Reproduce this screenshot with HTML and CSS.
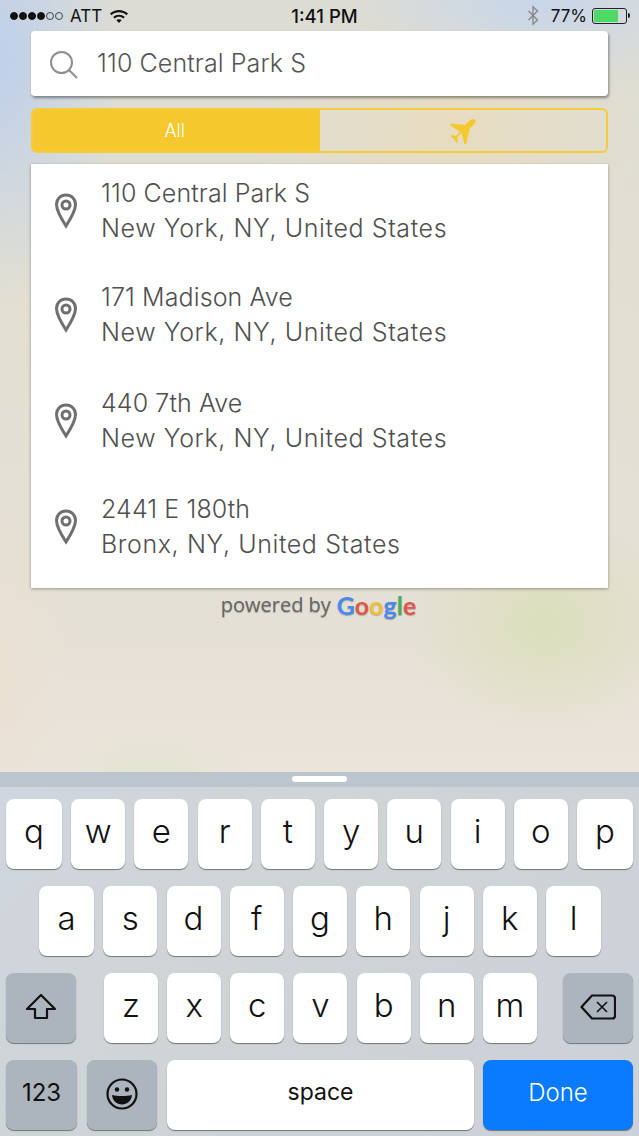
FILE: index.html
```html
<!DOCTYPE html>
<html lang="en">

<head>
    <meta charset="UTF-8">
    <meta name="viewport" content="width=device-width, initial-scale=1.0">
    <title>Search</title>
    <link rel="stylesheet" href="styles.css">
</head>

<body>
    <div class="page">
        <header class="statusBar">
            <div class="statusLeft">
                <span class="signal">
                    <i class="dot"></i><i class="dot"></i><i class="dot"></i><i class="dot"></i><i class="dot off"></i><i class="dot off"></i>
                </span>
                <span>ATT</span>
                <svg class="wifi" width="20" height="16" viewBox="0 0 20 16">
                    <path d="M1 5.6C6 .9 14 .9 19 5.6l-1.5 1.6C13.3 3.4 6.7 3.4 2.5 7.2z" />
                    <path d="M4.2 8.9c3.3-3 8.3-3 11.6 0l-1.5 1.6c-2.5-2.2-6.1-2.2-8.6 0z" />
                    <path d="M7.3 12.1c1.6-1.3 3.8-1.3 5.4 0L10 15z" />
                </svg>
            </div>
            <div class="statusTime">1:41 PM</div>
            <div class="statusRight">
                <svg class="bluetooth" width="12" height="20" viewBox="0 0 12 20">
                    <path d="M1.5 5.5l9 9L6 18.8V1.2l4.5 4.3-9 9" />
                </svg>
                <span>77%</span>
                <span class="battery"><span class="batteryFill"></span></span>
                <span class="batteryTip"></span>
            </div>
        </header>

        <section class="searchBox">
            <svg class="searchIcon" width="30" height="30" viewBox="0 0 30 30">
                <circle cx="12.5" cy="12.5" r="10.5" />
                <path d="M20 20l8 8" />
            </svg>
            <span class="searchText">110 Central Park S</span>
        </section>

        <section class="tabs">
            <div class="tab active">All</div>
            <div class="tab">
                <svg width="30" height="28" viewBox="0 0 30 28">
                    <path d="M27 2.500C28.500 3.500 27.500 6 25 8.500L21.500 12l-3 14.500-2 .5-3-11-4.500 4.500 1 4.500-1.500 1L6 22l-3.500-2.500 1-1.500L8 19l4-4.500L2 8.500l1.500-2L17 8l3.500-3.500C23 2 25.500 1.500 27 2.500z" />
                </svg>
            </div>
        </section>

        <section class="results">
            <article class="resultRow">
                <svg class="pin" width="24" height="36" viewBox="0 0 24 36"><use href="#pinShape" /></svg>
                <div class="resultText">
                    <div class="line">110 Central Park S</div>
                    <div class="line city">New York, NY, United States</div>
                </div>
            </article>
            <article class="resultRow">
                <svg class="pin" width="24" height="36" viewBox="0 0 24 36"><use href="#pinShape" /></svg>
                <div class="resultText">
                    <div class="line">171 Madison Ave</div>
                    <div class="line city">New York, NY, United States</div>
                </div>
            </article>
            <article class="resultRow">
                <svg class="pin" width="24" height="36" viewBox="0 0 24 36"><use href="#pinShape" /></svg>
                <div class="resultText">
                    <div class="line">440 7th Ave</div>
                    <div class="line city">New York, NY, United States</div>
                </div>
            </article>
            <article class="resultRow">
                <svg class="pin" width="24" height="36" viewBox="0 0 24 36"><use href="#pinShape" /></svg>
                <div class="resultText">
                    <div class="line">2441 E 180th</div>
                    <div class="line city">Bronx, NY, United States</div>
                </div>
            </article>
        </section>

        <div class="powered">
            <span>powered by</span>
            <span class="google"><b class="blue">G</b><b class="red">o</b><b class="yellow">o</b><b class="blue">g</b><b class="green">l</b><b class="red">e</b></span>
        </div>

        <section class="keyboard">
            <div class="grabBar"><span class="grabHandle"></span></div>
            <div class="keyRows">
                <div class="keyRow top">
                    <div class="key">q</div><div class="key">w</div><div class="key">e</div><div class="key">r</div><div class="key">t</div><div class="key">y</div><div class="key">u</div><div class="key">i</div><div class="key">o</div><div class="key">p</div>
                </div>
                <div class="keyRow middle">
                    <div class="key">a</div><div class="key">s</div><div class="key">d</div><div class="key">f</div><div class="key">g</div><div class="key">h</div><div class="key">j</div><div class="key">k</div><div class="key">l</div>
                </div>
                <div class="keyRow">
                    <div class="key wide gray">
                        <svg width="32" height="28" viewBox="0 0 32 28">
                            <path d="M16 2L2 16h8v9h12v-9h8z" />
                        </svg>
                    </div>
                    <div class="letters">
                        <div class="key">z</div><div class="key">x</div><div class="key">c</div><div class="key">v</div><div class="key">b</div><div class="key">n</div><div class="key">m</div>
                    </div>
                    <div class="key wide gray">
                        <svg width="36" height="26" viewBox="0 0 36 26">
                            <path d="M12 1.500h20a3 3 0 0 1 3 3v17a3 3 0 0 1-3 3H12L1.500 13z" />
                            <path class="thin" d="M17 8l10 10M27 8L17 18" />
                        </svg>
                    </div>
                </div>
                <div class="keyRow bottom">
                    <div class="key small gray num">123</div>
                    <div class="key wide gray">
                        <svg width="32" height="32" viewBox="0 0 32 32">
                            <circle cx="16" cy="16" r="14.500" />
                            <circle class="solid" cx="11" cy="11.500" r="2.200" />
                            <circle class="solid" cx="21" cy="11.500" r="2.200" />
                            <path class="solid" d="M6 17c6 1.300 14 1.300 20 0-.5 5.800-4.700 9.500-10 9.500S6.500 22.800 6 17z" />
                        </svg>
                    </div>
                    <div class="key space">space</div>
                    <div class="key done">Done</div>
                </div>
            </div>
        </section>
    </div>

    <svg class="defs" width="0" height="0">
        <symbol id="pinShape" viewBox="0 0 24 36">
            <path d="M12 2C6.500 2 2.500 6.300 2.500 11.500c0 6.500 5 14.500 9.500 21.500 4.500-7 9.500-15 9.500-21.500C21.500 6.300 17.500 2 12 2z" />
            <circle cx="12" cy="12" r="4" />
        </symbol>
    </svg>
</body>

</html>
```

FILE: styles.css
```css
* {
    margin: 0;
    padding: 0;
    box-sizing: border-box;
}

body {
    width: 639px;
    height: 1136px;
    overflow: hidden;
    font-family: "Inter", "Liberation Sans", sans-serif;
}

.page {
    width: 639px;
    height: 1136px;
    display: flex;
    flex-direction: column;
    background:
        radial-gradient(ellipse 120px 240px at 0 60px, #bfd0ea 0%, rgba(191, 208, 234, 0) 100%),
        radial-gradient(ellipse 180px 90px at 540px 0, #c8d6ea 0%, rgba(200, 214, 234, 0) 100%),
        radial-gradient(ellipse 140px 110px at 545px 625px, #dbdfbc 0%, rgba(219, 223, 188, 0) 100%),
        radial-gradient(ellipse 110px 60px at 150px 790px, #e1e5cd 0%, rgba(225, 229, 205, 0) 100%),
        radial-gradient(ellipse 70px 180px at 0 680px, #eae0d2 0%, rgba(234, 224, 210, 0) 100%),
        radial-gradient(ellipse 200px 120px at 450px 130px, #e8dcc0 0%, rgba(232, 220, 192, 0) 100%),
        linear-gradient(180deg, #dcdcd4 0%, #e2dfd2 25%, #e5e0d6 55%, #ebe5dc 70%);
}

.defs {
    position: absolute;
}

/* status bar */
.statusBar {
    height: 31px;
    flex: none;
    display: flex;
    align-items: center;
    justify-content: space-between;
    padding: 0 9px 0 10px;
    font-size: 17px;
    color: #111;
    position: relative;
}

.statusLeft {
    display: flex;
    align-items: center;
    gap: 7px;
}

.signal {
    display: flex;
    gap: 1px;
}

.dot {
    width: 8px;
    height: 8px;
    border-radius: 50%;
    background: #111;
    border: 1px solid #111;
}

.dot.off {
    background: none;
    border-color: #444;
}

.wifi {
    fill: #111;
}

.statusTime {
    position: absolute;
    left: 0;
    right: 0;
    text-align: center;
    font-weight: 500;
    font-size: 18.500px;
    padding-left: 10px;
}

.statusRight {
    display: flex;
    align-items: center;
    font-size: 17px;
}

.bluetooth {
    fill: none;
    stroke: #888;
    stroke-width: 1.300;
    margin-right: 12px;
    width: 12px;
    height: 21px;
}

.battery {
    width: 35px;
    height: 16px;
    margin-left: 5px;
    border: 1px solid #222;
    border-radius: 3px;
    padding: 1px;
    display: block;
}

.batteryFill {
    display: block;
    width: 76%;
    height: 100%;
    background: #4cd964;
    border-radius: 1px;
}

.batteryTip {
    width: 2px;
    height: 5px;
    margin-left: 1px;
    background: #222;
    border-radius: 0 2px 2px 0;
}

/* search */
.searchBox {
    height: 65px;
    flex: none;
    margin: 0 31px;
    display: flex;
    align-items: center;
    padding: 0 0 2px 18px;
    background: #fff;
    border-radius: 4px;
    box-shadow: 1px 2px 3px rgba(0, 0, 0, .4);
}

.searchIcon {
    fill: none;
    stroke: #8f8f8f;
    stroke-width: 2;
    margin-top: 4px;
}

.searchText {
    margin-left: 18px;
    font-size: 25px;
    font-weight: 300;
    color: #555;
    letter-spacing: .1px;
}

/* tabs */
.tabs {
    height: 45px;
    flex: none;
    margin: 12px 31px 0;
    display: flex;
    border: 2px solid #f5cb3c;
    border-radius: 6px;
    overflow: hidden;
}

.tab {
    width: 50%;
    display: flex;
    align-items: center;
    justify-content: center;
}

.tab svg {
    fill: #f5c92e;
}

.tab.active {
    background: #f5c92e;
    color: #fff;
    font-size: 18px;
    font-weight: 300;
    padding-right: 3px;
}

/* results */
.results {
    flex: none;
    height: 424px;
    margin: 11px 31px 0;
    background: #fff;
    box-shadow: 0 1px 3px rgba(0, 0, 0, .35);
}

.resultRow {
    height: 106px;
    display: flex;
    align-items: center;
    padding: 0 0 12px 23px;
}

.resultRow:first-child {
    height: 104px;
    padding-bottom: 10px;
}

.pin {
    fill: none;
    stroke: #707070;
    stroke-width: 3;
    flex: none;
}

.resultText {
    margin-left: 23px;
    font-size: 25px;
    font-weight: 300;
    line-height: 35px;
    color: #505050;
    letter-spacing: .1px;
}

.city {
    letter-spacing: .6px;
}

/* attribution */
.powered {
    flex: none;
    height: 33px;
    display: flex;
    align-items: center;
    justify-content: center;
    gap: 6px;
    font-family: "Open Sans", sans-serif;
    font-size: 20px;
    color: #666;
    margin-right: 2px;
    text-shadow: 0 1px 1px rgba(0, 0, 0, .25);
}

.google {
    font-family: "Lato", sans-serif;
    font-size: 25px;
}

.blue {
    color: #4a8af0;
}

.red {
    color: #e2574c;
}

.yellow {
    color: #f0bf3c;
}

.green {
    color: #4cae5b;
}

/* keyboard */
.keyboard {
    margin-top: auto;
    height: 364px;
    flex: none;
    background: linear-gradient(135deg, #d0d6df 0%, #cfd4d6 40%, #cbd1d8 100%);
}

.grabBar {
    height: 15px;
    background: #bcc4ce;
    display: flex;
    justify-content: center;
    padding-top: 4px;
}

.grabHandle {
    width: 55px;
    height: 6px;
    background: #fff;
    border-radius: 3px;
}

.keyRows {
    padding: 12px 6px 0;
    display: flex;
    flex-direction: column;
    gap: 17px;
}

.keyRow {
    height: 70px;
    display: flex;
    justify-content: space-between;
}

.keyRow.top .key:first-child,
.keyRow.top .key:last-child {
    width: 56px;
}

.keyRow.middle {
    padding: 0 32px 0 33px;
}

.keyRow.middle .key:first-child,
.keyRow.middle .key:last-child {
    width: 55px;
}

.letters {
    width: 433px;
    margin-left: 2px;
    display: flex;
    justify-content: space-between;
}

.key {
    width: 54px;
    height: 70px;
    display: flex;
    align-items: center;
    justify-content: center;
    padding-bottom: 6px;
    background: #fff;
    border-radius: 8px;
    box-shadow: 0 1px 1px rgba(0, 0, 0, .45);
    font-size: 33px;
    font-weight: 300;
    color: #111;
}

.key svg {
    fill: none;
    stroke: #111;
    stroke-width: 2.200;
    stroke-linejoin: round;
}

.key .thin {
    stroke-width: 1.600;
}

.key .solid {
    fill: #111;
    stroke: none;
}

.key.gray {
    background: #acb4bd;
    padding-bottom: 3px;
}

.key.wide {
    width: 70px;
}

.key.small {
    width: 71px;
}

.keyRow.bottom {
    justify-content: flex-start;
    gap: 10px;
}

.key.num {
    font-size: 24px;
    font-weight: 400;
    padding-bottom: 5px;
}

.key.space {
    width: 307px;
    font-size: 23px;
    font-weight: 400;
}

.key.done {
    width: 150px;
    margin-left: -1px;
    background: #0a7aff;
    color: #fff;
    font-size: 24px;
    font-weight: 300;
}
```
